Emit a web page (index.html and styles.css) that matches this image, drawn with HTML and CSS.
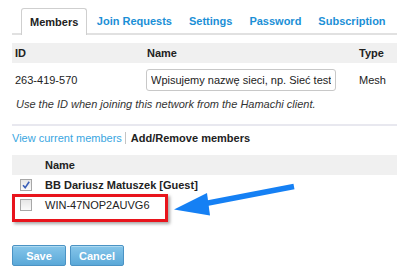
FILE: index.html
```html
<!DOCTYPE html>
<html>
<head>
<meta charset="utf-8">
<link rel="stylesheet" href="styles.css">
</head>
<body>
<div class="page">
  <ul class="tabs">
    <li class="tab active">Members</li>
    <li class="tab">Join Requests</li>
    <li class="tab">Settings</li>
    <li class="tab">Password</li>
    <li class="tab">Subscription</li>
  </ul>

  <div class="net">
    <div class="net-head">
      <div class="c-id">ID</div>
      <div class="c-name">Name</div>
      <div class="c-type">Type</div>
    </div>
    <div class="net-row">
      <div class="c-id">263-419-570</div>
      <div class="c-field"><input class="name-input" type="text" value="Wpisujemy nazwę sieci, np. Sieć testowa"></div>
      <div class="c-type">Mesh</div>
    </div>
  </div>
  <p class="note">Use the ID when joining this network from the Hamachi client.</p>

  <div class="rule"></div>

  <div class="subnav">
    <span class="link">View current members</span>
    <span class="divider"></span>
    <span class="current">Add/Remove members</span>
  </div>

  <div class="members">
    <div class="m-head">Name</div>
    <div class="m-row">
      <span class="cb checked"><svg viewBox="0 0 10 10" width="10" height="10"><path d="M2 5.2 L4.2 7.6 L8.2 1.8" fill="none" stroke="#3a5fb8" stroke-width="1.6"/></svg></span>
      <span class="m-name bold">BB Dariusz Matuszek [Guest]</span>
    </div>
    <div class="m-row">
      <span class="cb"></span>
      <span class="m-name">WIN-47NOP2AUVG6</span>
    </div>
  </div>

  <div class="actions">
    <button class="btn">Save</button>
    <button class="btn">Cancel</button>
  </div>

  <div class="highlight"></div>
  <svg class="arrow" width="397" height="273" viewBox="0 0 397 273">
    <line x1="294" y1="186.5" x2="203" y2="204" stroke="#1580f4" stroke-width="5.5"/>
    <polygon points="174,209.5 207,193 210,215.5" fill="#1580f4"/>
  </svg>
</div>
</body>
</html>
```

FILE: styles.css
```css
* { box-sizing: border-box; }
html, body { margin: 0; padding: 0; background: #fff; }
body {
  font-family: "Liberation Sans", Arial, sans-serif;
  font-size: 11px;
  color: #222;
  width: 397px;
  height: 273px;
  overflow: hidden;
}
.page {
  position: relative;
  padding: 8px 0 0 12px;
  height: 273px;
}
.tabs {
  list-style: none;
  margin: 0;
  padding: 0 0 0 9px;
  display: flex;
  height: 27px;
  border-bottom: 2px solid #e1e1e1;
  white-space: nowrap;
}
.tab {
  flex-shrink: 0;
  height: 27px;
  line-height: 26px;
  padding: 0 8.5px;
  font-weight: bold;
  color: #1b8fd6;
  font-size: 11px;
}
.tab.active {
  color: #222;
  background: #fff;
  border: 1px solid #cfcfcf;
  border-bottom: none;
  border-radius: 3px 3px 0 0;
  padding: 0 8px;
  margin-bottom: -2px;
  margin-right: 1px;
}
.net { margin-top: 8px; }
.net-head, .net-row {
  display: grid;
  grid-template-columns: 134px 210px 1fr;
  align-items: center;
}
.net-head {
  height: 20px;
  background: #f0f0f0;
  font-weight: bold;
}
.net-row { height: 34px; }
.c-id { padding-left: 3px; }
.c-name { padding-left: 1px; }
.c-type { padding-left: 3px; }
.name-input {
  display: block;
  width: 190px;
  height: 22px;
  margin: 0;
  padding: 0 4px;
  border: 1px solid #c8c8c8;
  border-radius: 3px;
  font-family: "Liberation Sans", Arial, sans-serif;
  font-size: 11px;
  color: #222;
  background: #fff;
  outline: none;
}
.note {
  margin: 0;
  padding-left: 4px;
  line-height: 14px;
  font-style: italic;
  color: #333;
}
.rule {
  margin-top: 13px;
  height: 2px;
  background: #e8e8ef;
}
.subnav {
  margin-top: 4px;
  height: 16px;
  display: flex;
  align-items: center;
}
.link { color: #3aa6df; }
.divider {
  display: inline-block;
  width: 1px;
  height: 12px;
  background: #c4c4c4;
  margin: 0 5px 0 3px;
}
.current { font-weight: bold; color: #222; }
.members { margin-top: 9px; }
.m-head {
  height: 20px;
  line-height: 20px;
  background: #f0f0f0;
  font-weight: bold;
  padding-left: 33px;
}
.m-row {
  height: 20px;
  display: flex;
  align-items: center;
  padding-left: 8px;
}
.cb {
  width: 12px;
  height: 12px;
  border: 1px solid #a7a7a7;
  background: linear-gradient(#e6e6e6, #fafafa);
  display: flex;
  align-items: center;
  justify-content: center;
  margin-right: 13px;
}
.m-name.bold { font-weight: bold; }
.actions {
  margin-top: 30px;
  display: flex;
  gap: 4px;
}
.btn {
  height: 21px;
  padding: 0;
  border: 1px solid #4b93c4;
  border-radius: 2px;
  background: linear-gradient(#86c6ea, #5aa8d8);
  color: #fff;
  font-family: "Liberation Sans", Arial, sans-serif;
  font-size: 11px;
  font-weight: bold;
  box-shadow: inset 0 1px 0 rgba(255,255,255,0.35);
}
.btn:first-child { width: 54px; }
.btn:last-child { width: 54px; }
.highlight {
  position: absolute;
  left: 12px;
  top: 194px;
  width: 156px;
  height: 28px;
  border: 3px solid #e8141c;
  box-shadow: 2px 2px 3px rgba(0,0,0,0.35);
}
.arrow {
  position: absolute;
  left: 0;
  top: 0;
  pointer-events: none;
}
```
